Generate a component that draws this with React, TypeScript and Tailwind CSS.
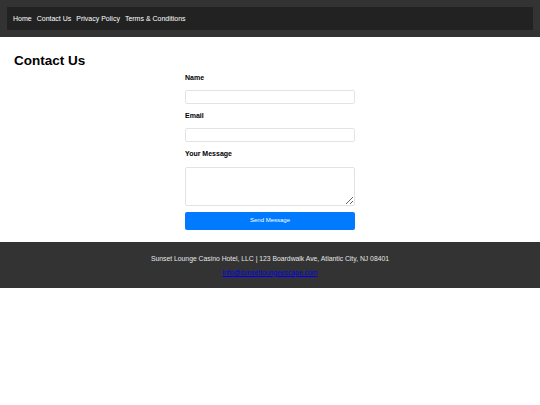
import React from "react";

const App: React.FC = () => {
  const links = ["Home", "Contact Us", "Privacy Policy", "Terms & Conditions"];

  return (
    <div className="min-h-[405px] bg-white font-['Liberation_Sans',Arial,sans-serif]">
      <header className="bg-[#333333] p-[7px]">
        <nav className="bg-[#222222] h-[23px] px-[6px] flex items-center gap-[5px]">
          {links.map((l) => (
            <a key={l} href="#" className="text-white text-[7px] leading-none">
              {l}
            </a>
          ))}
        </nav>
      </header>

      <main className="px-[14px] pt-[17px] pb-[12px]">
        <h1 className="text-[13.5px] font-bold text-black leading-none">Contact Us</h1>
        <form className="w-[170px] mx-auto mt-[6px] flex flex-col" onSubmit={(e) => e.preventDefault()}>
          <label className="text-[7px] font-bold text-black leading-none">Name</label>
          <input
            type="text"
            className="mt-[9px] h-[14px] w-full border border-[#e3e3e3] rounded-[2px]"
          />
          <label className="mt-[8px] text-[7px] font-bold text-black leading-none">Email</label>
          <input
            type="email"
            className="mt-[9px] h-[14px] w-full border border-[#e3e3e3] rounded-[2px]"
          />
          <label className="mt-[8px] text-[7px] font-bold text-black leading-none">Your Message</label>
          <textarea className="mt-[10px] h-[39px] w-full border border-[#e3e3e3] rounded-[2px]" />
          <button
            type="submit"
            className="mt-[6px] h-[18px] w-full bg-[#007bff] text-white text-[6px] rounded-[2px]"
          >
            Send Message
          </button>
        </form>
      </main>

      <footer className="bg-[#333333] h-[46px] pt-[3px] flex flex-col items-center justify-center gap-[7px]">
        <p className="text-[#e6e6e6] text-[6.8px] leading-none">
          Sunset Lounge Casino Hotel, LLC | 123 Boardwalk Ave, Atlantic City, NJ 08401
        </p>
        <a href="#" className="text-[#0000ee] underline text-[6.8px] leading-none">
          info@sunsetloungeescape.com
        </a>
      </footer>
    </div>
  );
};

export default App;
